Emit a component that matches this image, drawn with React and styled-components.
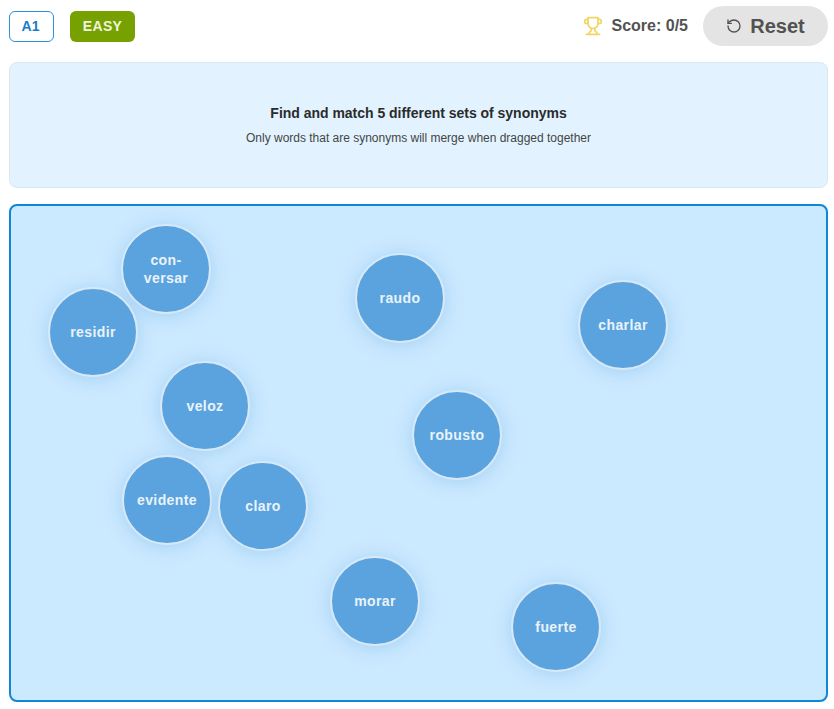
import styled, { createGlobalStyle } from 'styled-components';
import { LuTrophy, LuRotateCcw } from 'react-icons/lu';

const GlobalStyle = createGlobalStyle`
  html, body {
    margin: 0;
    padding: 0;
    background: #fff;
    font-family: "Liberation Sans", Arial, sans-serif;
  }
`;

const Page = styled.div`
  width: 834px;
  height: 709px;
  padding: 6px 6px 7px 9px;
  box-sizing: border-box;
  display: flex;
  flex-direction: column;
  overflow: hidden;
`;

const TopBar = styled.div`
  height: 40px;
  display: flex;
  align-items: center;
  justify-content: space-between;
  margin-bottom: 16px;
`;

const Group = styled.div`
  display: flex;
  align-items: center;
`;

const LevelBadge = styled.div`
  width: 45px;
  height: 31px;
  box-sizing: border-box;
  border: 1px solid #2f8fd8;
  border-radius: 6px;
  color: #1a7cc4;
  font-size: 14px;
  font-weight: 700;
  padding-right: 2px;
  display: flex;
  align-items: center;
  justify-content: center;
  margin-right: 16px;
`;

const EasyBadge = styled.div`
  width: 65px;
  height: 31px;
  border-radius: 6px;
  background: #76a100;
  color: #eef4dc;
  font-size: 14px;
  font-weight: 700;
  letter-spacing: 0.3px;
  display: flex;
  align-items: center;
  justify-content: center;
`;

const Score = styled.div`
  display: flex;
  align-items: center;
  gap: 9px;
  color: #525252;
  font-size: 16px;
  font-weight: 700;
  margin-right: 15px;

  svg {
    color: #f0d560;
    font-size: 20px;
  }
`;

const ResetButton = styled.button`
  width: 125px;
  height: 40px;
  border: none;
  border-radius: 20px;
  background: #e4e4e4;
  color: #525252;
  font-family: inherit;
  font-size: 20px;
  font-weight: 700;
  display: flex;
  align-items: center;
  justify-content: center;
  gap: 8px;
  padding: 0;

  svg {
    font-size: 16px;
  }
`;

const InfoPanel = styled.div`
  height: 126px;
  box-sizing: border-box;
  background: #e2f3ff;
  border: 1px solid #dbe8f2;
  border-radius: 8px;
  display: flex;
  flex-direction: column;
  align-items: center;
  justify-content: center;
  gap: 10px;
  margin-bottom: 16px;
`;

const Title = styled.div`
  color: #2b2b2b;
  font-size: 14px;
  font-weight: 700;
  letter-spacing: -0.02px;
`;

const Subtitle = styled.div`
  color: #454545;
  font-size: 12px;
  letter-spacing: -0.01px;
`;

const Board = styled.div`
  position: relative;
  flex: 1;
  background: #cbe9ff;
  border: 2px solid #0f87d2;
  border-radius: 8px;
`;

const Bubble = styled.div`
  position: absolute;
  left: ${(p) => p.$x - 45 - 11}px;
  top: ${(p) => p.$y - 45 - 206}px;
  width: 90px;
  height: 90px;
  box-sizing: border-box;
  border-radius: 50%;
  background: #5ba3de;
  border: 2px solid #d6e9f9;
  box-shadow: 0 2px 18px rgba(91, 163, 222, 0.35);
  color: #e9f3fb;
  font-size: 14px;
  font-weight: 700;
  letter-spacing: 0.4px;
  line-height: 18px;
  text-align: center;
  display: flex;
  align-items: center;
  justify-content: center;
`;

const words = [
  { text: 'con-\nversar', x: 166, y: 269 },
  { text: 'residir', x: 93, y: 332 },
  { text: 'raudo', x: 400, y: 298 },
  { text: 'charlar', x: 623, y: 325 },
  { text: 'veloz', x: 205, y: 406 },
  { text: 'robusto', x: 457, y: 435 },
  { text: 'evidente', x: 167, y: 500 },
  { text: 'claro', x: 263, y: 506 },
  { text: 'morar', x: 375, y: 601 },
  { text: 'fuerte', x: 556, y: 627 },
];

const BubbleText = styled.span`
  white-space: pre-line;
`;

const App = () => {
  return (
    <Page>
      <GlobalStyle />
      <TopBar>
        <Group>
          <LevelBadge>A1</LevelBadge>
          <EasyBadge>EASY</EasyBadge>
        </Group>
        <Group>
          <Score>
            <LuTrophy />
            Score: 0/5
          </Score>
          <ResetButton>
            <LuRotateCcw />
            Reset
          </ResetButton>
        </Group>
      </TopBar>

      <InfoPanel>
        <Title>Find and match 5 different sets of synonyms</Title>
        <Subtitle>Only words that are synonyms will merge when dragged together</Subtitle>
      </InfoPanel>

      <Board>
        {words.map((w) => (
          <Bubble key={w.text} $x={w.x} $y={w.y}>
            <BubbleText>{w.text}</BubbleText>
          </Bubble>
        ))}
      </Board>
    </Page>
  );
};

export default App;
